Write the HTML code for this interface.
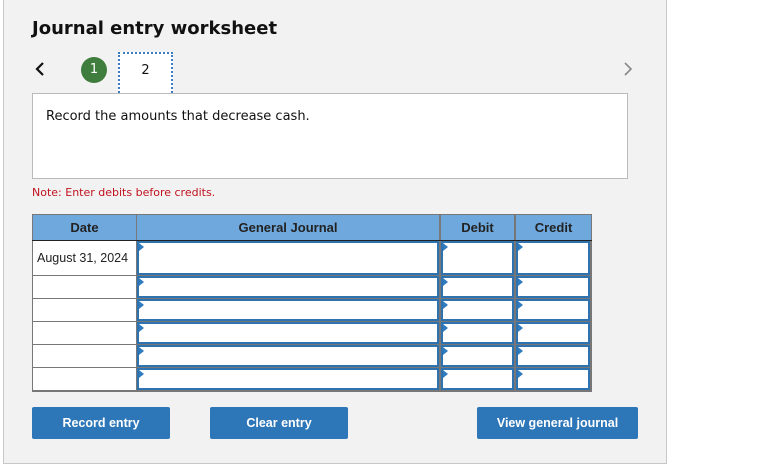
<!DOCTYPE html>
<html><head><style>
body{margin:0;width:779px;height:465px;background:#fff;position:relative;font-family:"DejaVu Sans","Liberation Sans",sans-serif;overflow:hidden}
.a{position:absolute;box-sizing:border-box}
.panel{left:3px;top:-1px;width:664px;height:465px;background:#f2f2f2;border:1px solid #c8c8c8}
.h{font-family:"Liberation Sans",sans-serif;font-weight:bold;font-size:13px;color:#222;text-align:center;line-height:25px}
.in{background:#fff;border:2px solid #2f72b0}
.tri{position:absolute;left:0;top:0;width:0;height:0;border-top:4px solid transparent;border-bottom:4px solid transparent;border-left:5px solid #2f7bbf}
.btn{background:#2d77b8;border-radius:2px;color:#fff;font-weight:bold;font-size:12.5px;text-align:center;line-height:33px;font-family:"Liberation Sans",sans-serif}
</style></head><body>
<div class="a panel"></div>
<div class="a" style="left:32px;top:18px;font-size:18px;font-weight:bold;color:#111">Journal entry worksheet</div>
<svg class="a" style="left:34px;top:61px" width="12" height="16"><path d="M9 2 L3 8 L9 14" stroke="#111" stroke-width="2.2" fill="none"/></svg>
<div class="a" style="left:81px;top:57px;width:26px;height:26px;border-radius:50%;background:#3f7d3f;color:#fff;font-size:13px;text-align:center;line-height:26px">1</div>
<div class="a" style="left:118px;top:52px;width:55px;height:44px;background:#fff;border:2px dotted #3a7cc0;font-size:13px;text-align:center;line-height:34px;color:#111">2</div>
<svg class="a" style="left:622px;top:61px" width="12" height="16"><path d="M3 2 L9 8 L3 14" stroke="#888" stroke-width="1.6" fill="none"/></svg>
<div class="a" style="left:32px;top:93px;width:596px;height:86px;background:#fff;border:1px solid #bbb"></div>
<div class="a" style="left:46px;top:109px;font-size:13px;color:#111">Record the amounts that decrease cash.</div>
<div class="a" style="left:32px;top:186px;font-size:11px;color:#c0121f">Note: Enter debits before credits.</div>

<div class="a" style="left:32px;top:214px;width:560px;height:178px;background:#777"></div>
<div class="a h" style="left:33px;top:215px;width:103px;height:25px;background:#6fa8dc">Date</div>
<div class="a h" style="left:137px;top:215px;width:302px;height:25px;background:#6fa8dc">General Journal</div>
<div class="a h" style="left:441px;top:215px;width:73px;height:25px;background:#6fa8dc">Debit</div>
<div class="a h" style="left:516px;top:215px;width:75px;height:25px;background:#6fa8dc">Credit</div>
<div class="a" style="left:32px;top:240px;width:560px;height:1px;background:#222"></div>

<div id="rows"></div>
<script>
var ys=[[241,34],[276,22],[299,22],[322,22],[345,22],[368,22]];
var h='';
ys.forEach(function(r,i){
 h+='<div class="a" style="left:33px;top:'+r[0]+'px;width:103px;height:'+r[1]+'px;background:#fff;font-family:Liberation Sans,sans-serif;font-size:12.5px;color:#222;line-height:'+r[1]+'px;padding-left:4px">'+(i==0?'August 31, 2024':'')+'</div>';
 [[137,302],[441,73],[516,74]].forEach(function(c){
  h+='<div class="a in" style="left:'+c[0]+'px;top:'+r[0]+'px;width:'+c[1]+'px;height:'+r[1]+'px"><div class="tri"></div></div>';
 });
});
document.getElementById('rows').innerHTML=h;
</script>

<div class="a btn" style="left:32px;top:407px;width:138px;height:32px">Record entry</div>
<div class="a btn" style="left:210px;top:407px;width:138px;height:32px">Clear entry</div>
<div class="a btn" style="left:477px;top:407px;width:161px;height:32px">View general journal</div>
</body></html>
